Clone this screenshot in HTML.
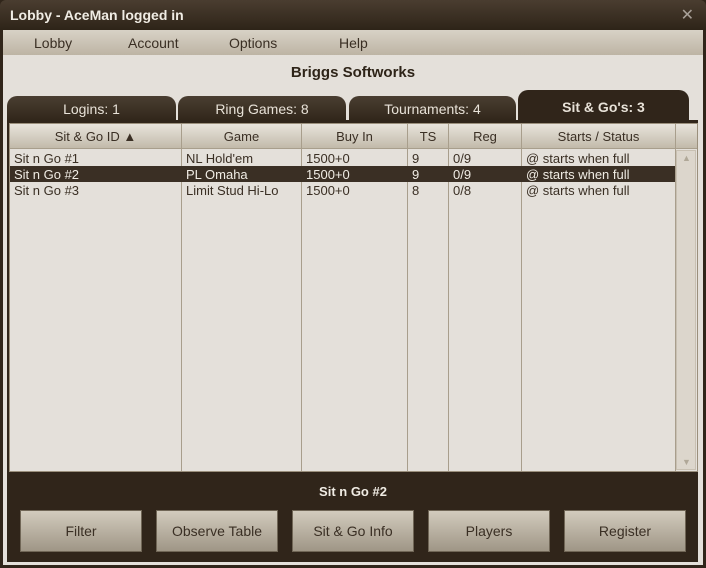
<!DOCTYPE html>
<html><head><style>
*{margin:0;padding:0;box-sizing:border-box}
body{width:706px;height:568px;background:#30251a;font-family:"Liberation Sans",sans-serif;position:relative;overflow:hidden}
.title{position:absolute;left:0;top:0;width:706px;height:30px;background:linear-gradient(#4a3d30,#2e2418);border-radius:6px 6px 0 0;color:#f0ece4;font-weight:bold;font-size:14px;padding:7px 10px}
.x{position:absolute;right:12px;top:5px;color:#a8a098;font-size:16px;font-weight:normal}
.win{position:absolute;left:3px;top:30px;width:700px;height:535px;background:#e4e0da}
.menu{position:absolute;left:3px;top:30px;width:700px;height:25px;background:linear-gradient(#d8d2c6,#bdb4a4);font-size:14px;color:#3a2f24}
.menu span{position:absolute;top:5px}
.brand{position:absolute;left:0;width:706px;top:64px;text-align:center;font-weight:bold;font-size:15px;color:#2e2418}
.tab{position:absolute;top:96px;height:26px;background:linear-gradient(#4a3e31,#2f2519);border-radius:10px 10px 0 0;color:#e8e2d8;font-size:14px;text-align:center;padding-top:5px}
.panel{position:absolute;left:7px;top:120px;width:691px;height:442px;background:#30251a}
.tbl{position:absolute;left:9px;top:123px;width:689px;height:349px;background:#e4e0da;border:1px solid #9a8f7c}
.hd{position:absolute;top:0;height:25px;background:linear-gradient(#e8e4dc,#c2baaa);border-right:1px solid #a89e8c;border-bottom:1px solid #a89e8c;font-size:13px;color:#3a2f24;text-align:center;padding-top:5px}
.col{position:absolute;top:25px;bottom:0;border-right:1px solid #a89e8c}
.row{position:absolute;left:0;width:665px;height:16px;font-size:13px;color:#3a2f24}
.row.sel{background:#3a2f24;color:#f0ece4}
.row span{position:absolute;top:1px}
.sb{position:absolute;left:666px;top:26px;width:20px;height:320px;background:#dcd6cc;border:1px solid #c8c0b2}
.btn{position:absolute;top:510px;width:122px;height:42px;background:linear-gradient(#d2cbbd,#9f9686);border:1px solid #706656;font-size:14px;color:#3a2f24;text-align:center;padding-top:12px}
.foot{position:absolute;left:0;width:706px;top:484px;text-align:center;color:#f0ece4;font-weight:bold;font-size:13px}
</style></head><body>
<div class="title">Lobby - AceMan logged in<span class="x">✕</span></div>
<div class="win"></div>
<div class="menu"><span style="left:31px">Lobby</span><span style="left:125px">Account</span><span style="left:226px">Options</span><span style="left:336px">Help</span></div>
<div class="brand">Briggs Softworks</div>
<div class="tab" style="left:7px;width:169px">Logins: 1</div>
<div class="tab" style="left:178px;width:168px">Ring Games: 8</div>
<div class="tab" style="left:349px;width:167px">Tournaments: 4</div>
<div class="tab" style="left:518px;width:171px;top:90px;height:32px;background:#30251a;font-weight:bold;padding-top:9px">Sit &amp; Go's: 3</div>
<div class="panel"></div>
<div class="tbl">
<div class="hd" style="left:0;width:172px">Sit &amp; Go ID ▲</div>
<div class="hd" style="left:172px;width:120px">Game</div>
<div class="hd" style="left:292px;width:106px">Buy In</div>
<div class="hd" style="left:398px;width:41px">TS</div>
<div class="hd" style="left:439px;width:73px">Reg</div>
<div class="hd" style="left:512px;width:154px">Starts / Status</div>
<div class="hd" style="left:666px;width:21px;border-right:none"></div>
<div class="col" style="left:0;width:172px"></div>
<div class="col" style="left:172px;width:120px"></div>
<div class="col" style="left:292px;width:106px"></div>
<div class="col" style="left:398px;width:41px"></div>
<div class="col" style="left:439px;width:73px"></div>
<div class="col" style="left:512px;width:154px"></div>
<div class="row" style="top:26px"><span style="left:4px">Sit n Go #1</span><span style="left:176px">NL Hold'em</span><span style="left:296px">1500+0</span><span style="left:402px">9</span><span style="left:443px">0/9</span><span style="left:516px">@ starts when full</span></div>
<div class="row sel" style="top:42px"><span style="left:4px">Sit n Go #2</span><span style="left:176px">PL Omaha</span><span style="left:296px">1500+0</span><span style="left:402px">9</span><span style="left:443px">0/9</span><span style="left:516px">@ starts when full</span></div>
<div class="row" style="top:58px"><span style="left:4px">Sit n Go #3</span><span style="left:176px">Limit Stud Hi-Lo</span><span style="left:296px">1500+0</span><span style="left:402px">8</span><span style="left:443px">0/8</span><span style="left:516px">@ starts when full</span></div>
<div class="sb"><div style="position:absolute;top:2px;left:5px;color:#b0a898;font-size:9px">▲</div><div style="position:absolute;bottom:2px;left:5px;color:#b0a898;font-size:9px">▼</div></div>
</div>
<div class="foot">Sit n Go #2</div>
<div class="btn" style="left:20px">Filter</div>
<div class="btn" style="left:156px">Observe Table</div>
<div class="btn" style="left:292px">Sit &amp; Go Info</div>
<div class="btn" style="left:428px">Players</div>
<div class="btn" style="left:564px">Register</div>
</body></html>
